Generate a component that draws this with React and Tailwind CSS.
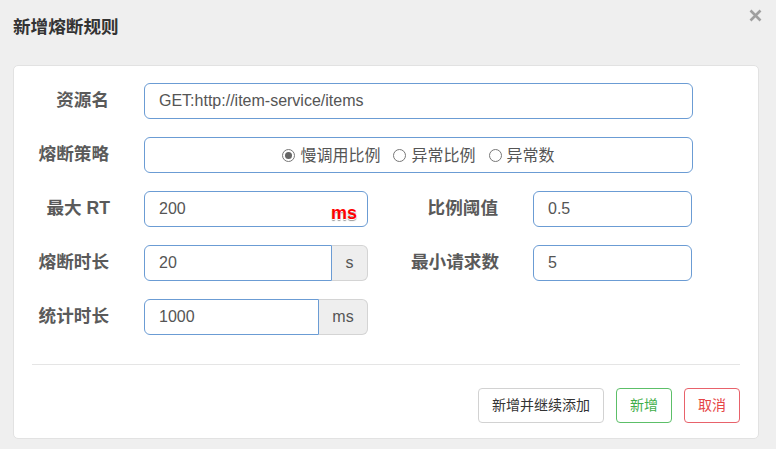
import React from "react";

const font = { fontFamily: '"Liberation Sans", "Noto Sans CJK SC", sans-serif' };

function Label({ children, className = "" }) {
  return (
    <div className={`text-right text-[17.6px] font-bold text-[#5a5a5a] leading-none ${className}`}>{children}</div>
  );
}

function Radio({ checked, label }) {
  return (
    <label className="flex items-center gap-[5px]">
      <span className="w-[13px] h-[13px] rounded-full border border-[#777] bg-white flex items-center justify-center">
        {checked && <span className="w-[7px] h-[7px] rounded-full bg-[#666]" />}
      </span>
      <span className="text-[16px] text-[#555] leading-none">{label}</span>
    </label>
  );
}

function TextBox({ value, className = "", children }) {
  return (
    <div className={`relative h-[36px] border border-[#6b9cd4] rounded-[6px] bg-white flex items-center pl-[14px] text-[16px] text-[#555] ${className}`}>
      {value}
      {children}
    </div>
  );
}

function AddonBox({ value, unit, inputW, addonW }) {
  return (
    <div className="flex h-[36px]">
      <div
        className="border border-[#6b9cd4] rounded-l-[6px] bg-white flex items-center pl-[14px] text-[16px] text-[#555]"
        style={{ width: inputW }}
      >
        {value}
      </div>
      <div
        className="border border-l-0 border-[#d4d4d4] rounded-r-[6px] bg-[#eeeeee] flex items-center justify-center text-[16px] text-[#555]"
        style={{ width: addonW }}
      >
        {unit}
      </div>
    </div>
  );
}

export default function App() {
  return (
    <div className="w-[776px] h-[449px] bg-[#efefef] relative overflow-hidden" style={font}>
      {/* header */}
      <div className="h-[65px] flex items-start pl-[13px] pt-[18px]">
        <h2 className="text-[17.6px] font-bold text-[#333] leading-[19px]">新增熔断规则</h2>
      </div>
      <button className="absolute right-[14px] top-[9px] text-[#a0a0a0]">
        <svg width="13" height="13" viewBox="0 0 13 13">
          <path d="M1.5 1.5 L11.5 11.5 M11.5 1.5 L1.5 11.5" stroke="currentColor" strokeWidth="2.6" strokeLinecap="butt" />
        </svg>
      </button>

      {/* panel */}
      <div className="ml-[13px] w-[746px] h-[374px] bg-white rounded-[5px] border border-[#e2e2e2] pt-[17px]">
        <div className="flex flex-col gap-[18px]">
          <div className="flex items-center">
            <Label className="w-[95px]">资源名</Label>
            <TextBox value="GET:http://item-service/items" className="ml-[35px] w-[549px]" />
          </div>
          <div className="flex items-center">
            <Label className="w-[95px]">熔断策略</Label>
            <div className="ml-[35px] w-[549px] h-[36px] border border-[#6b9cd4] rounded-[6px] bg-white flex items-center justify-center gap-[13px] pt-[1px]">
              <Radio checked label="慢调用比例" />
              <Radio label="异常比例" />
              <Radio label="异常数" />
            </div>
          </div>
          <div className="flex items-center">
            <Label className="w-[96px]">最大 RT</Label>
            <TextBox value="200" className="ml-[34px] w-[224px]">
              <span className="absolute right-[10px] bottom-[4px] text-[18px] font-bold text-[#ff0000] leading-none [text-shadow:0_1px_0_#fff,0_2px_1px_#999]">
                ms
              </span>
            </TextBox>
            <Label className="w-[130px]">比例阈值</Label>
            <TextBox value="0.5" className="ml-[35px] w-[159px]" />
          </div>
          <div className="flex items-center">
            <Label className="w-[95px]">熔断时长</Label>
            <div className="ml-[35px]">
              <AddonBox value="20" unit="s" inputW={188} addonW={36} />
            </div>
            <Label className="w-[131px]">最小请求数</Label>
            <TextBox value="5" className="ml-[34px] w-[159px]" />
          </div>
          <div className="flex items-center">
            <Label className="w-[95px]">统计时长</Label>
            <div className="ml-[35px]">
              <AddonBox value="1000" unit="ms" inputW={175} addonW={49} />
            </div>
          </div>
        </div>

        <div className="mx-[18px] mt-[29px] border-t border-[#e5e5e5]" />

        <div className="flex justify-end gap-[12px] pr-[18px] mt-[23px]">
          <button className="h-[35px] w-[126px] text-[14px] text-[#333] border border-[#d2d2d2] rounded-[4px] bg-white">
            新增并继续添加
          </button>
          <button className="h-[35px] w-[56px] text-[14px] text-[#3fae49] border border-[#5cbf68] rounded-[4px] bg-white">
            新增
          </button>
          <button className="h-[35px] w-[56px] text-[14px] text-[#e64545] border border-[#e8626b] rounded-[4px] bg-white">
            取消
          </button>
        </div>
      </div>
    </div>
  );
}
